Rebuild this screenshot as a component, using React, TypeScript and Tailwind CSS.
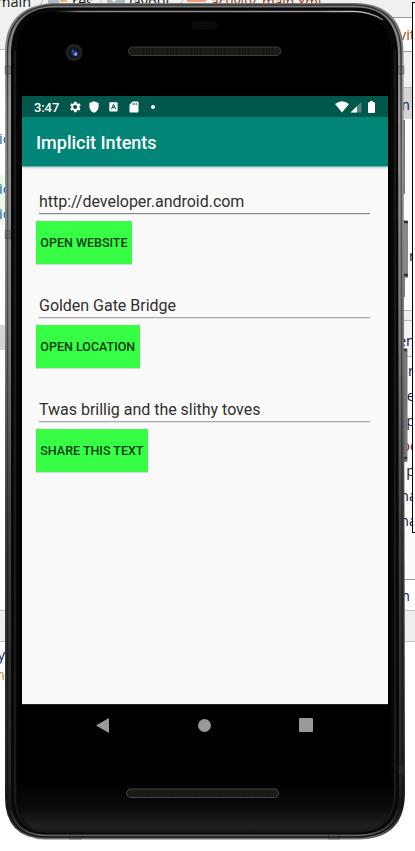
const code = 'whitespace-nowrap text-[14.5px] leading-[25px]';

function Breadcrumbs() {
  return (
    <header className="flex h-[50px] shrink-0 items-start border-b border-[#c4c4c4] bg-[#f0f0f0] text-[14.5px] leading-[18px] text-[#1a1a1a]">
      <div className="-mt-[7px] flex h-[26px] w-full items-start whitespace-nowrap">
        <span className="-ml-[3px] w-[43px]">main</span>
        <svg className="mt-[7px] shrink-0" width="30" height="8" viewBox="0 0 30 8">
          <path d="M3 0 0 6" stroke="#bbb" />
          <path d="M8 0h11v6H8z" fill="#aeb9c0" />
          <path d="M20 0h7v2h-7z" fill="#e4b864" />
        </svg>
        <span className="ml-[2px] w-[28px]">res</span>
        <svg className="mt-[7px] shrink-0" width="26" height="8" viewBox="0 0 26 8">
          <path d="M1 0v4" stroke="#bbb" />
          <path d="M7 0h5l2 3 2-3h9v6H7z" fill="#aeb9c0" />
        </svg>
        <span className="ml-[3px] w-[50px]">layout</span>
        <svg className="mt-[7px] shrink-0" width="27" height="8" viewBox="0 0 27 8">
          <path d="M4 0 1 6" stroke="#bbb" />
          <path d="M8 0h19v2H8z" fill="#ef9c78" />
        </svg>
        <span className="ml-[5px] text-[13.8px] text-[#923c14]">activity_main.xml</span>
      </div>
    </header>
  );
}

function LeftEditor() {
  return (
    <aside className={`flex w-[5px] flex-col overflow-hidden text-[#0065b5] ${code}`}>
      <div className="h-[76px]" />
      <div className="-ml-px flex h-[25px]"><span>ic</span></div>
      <div className="mt-[24px] flex h-[50px] flex-col items-start bg-[#edf8e6] pt-px">
        <span className="-ml-px h-[25px]">ic</span>
        <span className="-ml-px h-[24px]">ic</span>
      </div>
      <div className="mt-[100px] h-[25px] bg-[#d4d4d4]" />
      <div className="mt-[260px] h-[32px] border-y border-[#c4c4c4] bg-[#eee]" />
      <div className="flex justify-end text-[#13204a]"><span>y</span></div>
      <div className="-mt-[5px] flex justify-end text-[#cf8a3a]"><span>n</span></div>
    </aside>
  );
}

function RightEditor() {
  return (
    <aside className={`flex w-[30px] flex-col overflow-hidden text-[#13204a] ${code}`}>
      <div className="h-[17px] bg-[#f0f0f0]" />
      <div className="flex h-[35px] items-center justify-end border-y border-[#999] bg-white text-[#a64c12]">
        <span>vit</span>
      </div>
      <div className="h-[36px] border-b border-[#bbb] bg-[#f0f0f0]" />
      <div className="flex h-[31px] items-center justify-end bg-[#d4d4d4] pr-[5px] pt-px"><span>m</span></div>
      <div className="flex h-[191px] justify-end bg-[#fcfcfc] pt-[124px]"><span>r</span></div>
      <div className="h-[11px] border-y border-[#bbb] bg-[#f0f0f0]" />
      <div className="flex h-[36px] items-center justify-end border-b border-[#bbb] bg-[#f2f2f4] pt-[3px]"><span>en</span></div>
      <div className="flex h-[222px] flex-col items-end bg-[#fcfcfc] pt-px">
        <span className="pr-px">r</span>
        <span>e</span>
        <span>p</span>
        <span className="-mr-[2px] text-[#76205a]">oc</span>
        <span>p</span>
        <span className="-mr-[2px]">na</span>
        <span className="-mr-[2px]">na</span>
      </div>
      <div className="flex h-[31px] items-center justify-end border-t border-[#999] bg-white pr-[5px] pt-px"><span>m</span></div>
      <div className="h-[32px] border-y border-[#c4c4c4] bg-[#eee]" />
    </aside>
  );
}

function Desktop() {
  return (
    <div className="col-start-1 row-start-1 flex h-[851px] w-[415px] overflow-hidden bg-white font-['Open_Sans','Noto_Sans',sans-serif]">
      <div className="flex w-[385px] flex-col">
        <Breadcrumbs />
        <LeftEditor />
      </div>
      <RightEditor />
    </div>
  );
}

/* Empty handset: metal edge, glass, camera, speakers and side keys. */
function Handset() {
  return (
    <svg className="col-start-1 row-start-1" width="415" height="851" viewBox="0 0 415 851" fill="none">
      <defs>
        <linearGradient id="rim" x1="0" y1="3" x2="0" y2="840" gradientUnits="userSpaceOnUse">
          <stop offset="0" stopColor="#777" />
          <stop offset=".12" stopColor="#999" />
          <stop offset=".4" stopColor="#777" />
          <stop offset=".62" stopColor="#3f3f3f" />
          <stop offset=".93" stopColor="#252525" />
          <stop offset=".96" stopColor="#151515" />
          <stop offset=".985" stopColor="#3a3a3a" />
          <stop offset="1" stopColor="#777" />
        </linearGradient>
        <linearGradient id="edge" x1="0" y1="3" x2="0" y2="840" gradientUnits="userSpaceOnUse">
          <stop offset="0" stopColor="#303030" />
          <stop offset=".05" stopColor="#333" />
          <stop offset=".2" stopColor="#5a5a5a" />
          <stop offset=".5" stopColor="#3a3a3a" />
          <stop offset=".75" stopColor="#1b1b1b" />
          <stop offset="1" stopColor="#111" />
        </linearGradient>
        <linearGradient id="chin" x1="0" y1="775" x2="0" y2="834" gradientUnits="userSpaceOnUse">
          <stop stopColor="#000" />
          <stop offset=".5" stopColor="#080808" />
          <stop offset=".88" stopColor="#202020" />
          <stop offset="1" stopColor="#131313" />
        </linearGradient>
        <linearGradient id="glint" x1="55" y1="0" x2="384" y2="0" gradientUnits="userSpaceOnUse">
          <stop stopColor="#777" stopOpacity="0" />
          <stop offset=".08" stopColor="#888" />
          <stop offset=".8" stopColor="#999" />
          <stop offset=".95" stopColor="#d6dcdc" />
          <stop offset="1" stopColor="#777" />
        </linearGradient>
        <pattern id="mesh" width="3" height="4" patternUnits="userSpaceOnUse">
          <path d="M0 0h3v4H0z" fill="#161511" />
          <path d="M1 0v4" stroke="#24231f" />
        </pattern>
        <radialGradient id="lens">
          <stop stopColor="#23345f" />
          <stop offset="1" stopColor="#0c0e18" />
        </radialGradient>
      </defs>
      <path d="M404 120v74M404 278v19" stroke="#777" strokeWidth="2" />
      <rect x="402" y="220.5" width="6" height="57.5" rx="1.5" fill="#888" />
      <path d="M404 222h4M404 275h4" stroke="#333" strokeWidth="2.5" />
      <rect x="401" y="348.5" width="6.5" height="113.5" rx="1.5" fill="#777" />
      <path d="M404 350h3M404 458h3" stroke="#333" strokeWidth="2.5" />
      <path d="M53 3H356Q403 4 403.5 52L405 792Q405 839.5 358 839.5H45Q5 838 5 797V52Q5 6 53 3Z" fill="url(#rim)" />
      <path d="M53 5H356Q400.5 7 401 53L402.5 792Q402 836 358 837H45Q7.500 836 7.500 797V53Q8 8 53 5Z" stroke="url(#edge)" strokeWidth="1.5" />
      <path d="M53 7.500H356Q397 8 398 54L399 792Q399 834.5 358 834.5H45Q11 834 11 797V54Q11 9 53 7.500Z" fill="#080808" />
      <path d="M15 50V797Q16 831 45 831.5H358Q394 831 395 793V50" stroke="#1a1a1a" strokeWidth="2" />
      <path d="M17 775H393V795Q392 830 358 832H46Q19 830 17 797Z" fill="url(#chin)" />
      <path d="M17 52Q18 12 56 12H350Q389 13 391 52V785H17Z" fill="#000" />
      <path d="M55 11.5H350Q369 11 383 20" stroke="url(#glint)" strokeWidth="1.3" />
      <path d="M5 66h6v8H5zM5 230.5h6v8H5zM398 66h6v8h-6zM398.5 766h6v8h-6zM69.5 834h12v5h-12zM328.5 834h11v5h-11z" fill="#4444" stroke="#2225" />
      <rect x="191" y="21" width="27" height="9" rx="4.5" fill="#090a0e" />
      <circle cx="74" cy="52.5" r="8.5" fill="#222223" />
      <circle cx="74" cy="52.5" r="5.5" fill="url(#lens)" />
      <path d="m72 50 1.5 2" stroke="#4056a9" strokeWidth="1.5" />
      <circle cx="75.5" cy="54" r="2.3" fill="#4458b8" />
      <circle cx="75.8" cy="54.3" r="1" fill="#c0c9ff" />
      <rect x="128.5" y="47" width="152.5" height="8.5" rx="4.2" fill="url(#mesh)" stroke="#3c3c3a" />
      <rect x="126.5" y="789" width="152" height="8.5" rx="4.2" fill="url(#mesh)" stroke="#474745" />
    </svg>
  );
}

function StatusBar() {
  return (
    <div className="flex h-[21px] shrink-0 items-center bg-[#00574b] px-[12px] text-white">
      <span className="w-[35px] pt-px text-[13px] font-medium leading-none tracking-[-0.1px]">3:47</span>
      <svg width="12" height="12" viewBox="2 2 20 20" fill="currentColor">
        <path d="M19.43 12.98c.04-.32.07-.64.07-.98s-.03-.66-.07-.98l2.11-1.65-2-3.46-2.49 1a8 8 0 0 0-1.69-.98L14.48 3.3h-4l-.38 2.65a8 8 0 0 0-1.69.98l-2.49-1-2 3.46 2.11 1.65a8 8 0 0 0 0 1.96l-2.11 1.65 2 3.46 2.49-1a8 8 0 0 0 1.69.98l.38 2.65h4l.38-2.65a8 8 0 0 0 1.69-.98l2.49 1 2-3.46zM12.2 15.5a3.5 3.5 0 1 1 0-7 3.5 3.5 0 0 1 0 7" />
      </svg>
      <svg className="ml-[8px]" width="10" height="12" viewBox="0 0 10 12" fill="currentColor">
        <path d="M5 .2 9.6 2v3.7C9.6 8.5 7.6 11 5 11.8 2.4 11 .4 8.5.4 5.7V2z" />
      </svg>
      <svg className="ml-[10px]" width="9" height="10" viewBox="0 0 9 10">
        <rect x=".3" y=".3" width="8.3" height="9.2" rx=".8" fill="white" />
        <path d="m2.5 7.2 2-5 2 5M3.3 5.5h2.4" fill="none" stroke="#00574b" />
      </svg>
      <svg className="ml-[11px]" width="10" height="12" viewBox="0 0 10 12">
        <path d="M3.6.5h5.1q.8 0 .8.8v9.4q0 .8-.8.8H1.3q-.8 0-.8-.8V3.8z" fill="white" />
        <path d="M4 2v2M5.8 2v2M7.6 2v2" stroke="#00574b" strokeWidth=".8" />
      </svg>
      <span className="ml-[12px] size-[4px] rounded-full bg-white" />
      <svg className="ml-auto" width="14" height="12" viewBox="0 0 14 12" fill="currentColor">
        <path d="M0 3Q7-2.4 14 3L7 11.6z" />
      </svg>
      <svg className="ml-[1px]" width="12" height="12" viewBox="0 0 12 12" fill="currentColor">
        <path d="M11.5.8v10.7H.5z" opacity=".3" />
        <path d="M7 5.2v6.3H.5z" />
      </svg>
      <svg className="ml-[6px] mr-px" width="7" height="12" viewBox="0 0 7 12" fill="currentColor">
        <path d="M2 0h3v1.2h1.2q.8 0 .8.8v9.2q0 .8-.8.8H.8q-.8 0-.8-.8V2q0-.8.8-.8H2z" />
      </svg>
    </div>
  );
}

const entries = [
  { text: 'http://developer.android.com', action: 'OPEN WEBSITE', field: 'border-[#898589]' },
  { text: 'Golden Gate Bridge', action: 'OPEN LOCATION', field: 'border-[#aaa7aa]' },
  { text: 'Twas brillig and the slithy toves', action: 'SHARE THIS TEXT', field: 'border-[#aaa7aa]' },
];

function Screen() {
  return (
    <div className="col-start-1 row-start-1 flex w-[410px] flex-col px-[22px] pt-[96px]">
      <div className="flex h-[608px] flex-col bg-[#fafafa]">
        <StatusBar />
        <h1 className="flex h-[49px] shrink-0 items-center bg-[#008577] px-[14px] pt-[2px] text-[18px] font-medium leading-[24px] text-white shadow-[0_1px_1px_#00857788,0_2px_3px_#0002]">
          Implicit Intents
        </h1>
        <main className="flex flex-col gap-[30px] pl-[14px] pr-[15px] pt-[24px]">
          {entries.map((entry) => (
            <section key={entry.action} className="flex flex-col items-start gap-[7px]">
              <div className="self-stretch px-[3px]">
                <div className={`h-[24px] border-b text-[16px] leading-[23px] tracking-[-0.02px] text-[#303030] shadow-[0_1px_0_#e4e4e4] ${entry.field}`}>{entry.text}</div>
              </div>
              <button className="flex h-[43px] items-center bg-[#36ff46] px-[4.3px] pt-px text-[12.5px] font-medium text-[#0b3a0f] shadow-[0_1px_1px_#0002]">
                {entry.action}
              </button>
            </section>
          ))}
        </main>
      </div>
      <nav className="flex h-[43px] items-center justify-between border-t border-[#242424] pb-[2px] pl-[74px] pr-[75px]">
        <svg width="13" height="15" viewBox="0 0 13 15" fill="#999">
          <path d="M13 0v15L0 7.5z" />
        </svg>
        <span className="size-[13px] rounded-full bg-[#999]" />
        <span className="size-[14px] rounded-[1px] bg-[#999]" />
      </nav>
    </div>
  );
}

export default function App() {
  return (
    <div className="grid h-[851px] w-[415px] overflow-hidden bg-white font-['Roboto',sans-serif]">
      <Desktop />
      <div className="col-start-1 row-start-1 mt-[2px] h-[531px] w-[9px] justify-self-end -mr-[6px] border border-black bg-white" />
      <Handset />
      <Screen />
    </div>
  );
}
